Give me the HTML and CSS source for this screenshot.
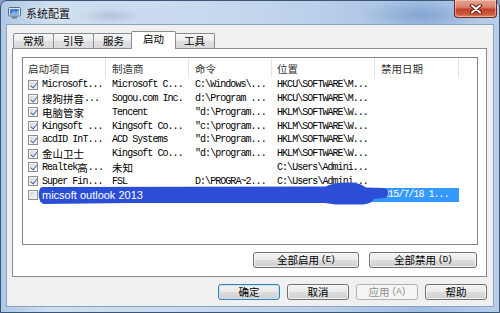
FILE: index.html
```html
<!DOCTYPE html>
<html>
<head>
<meta charset="utf-8">
<title>系统配置</title>
<link rel="stylesheet" href="styles.css">
</head>
<body>
<div class="window">
  <div class="titlebar">
    <svg class="app-icon" width="13" height="12" viewBox="0 0 13 12">
      <rect x="0.5" y="0.5" width="12" height="8.5" rx="1" fill="#e4e9f0" stroke="#5d6c80"/>
      <rect x="2" y="2" width="9" height="5.5" fill="#3f7fd2"/>
      <path d="M2 7.5 L6 4 L8 5.5 L11 3 L11 7.5 Z" fill="#7fb2ea"/>
      <rect x="4" y="9.5" width="5" height="2" fill="#6d7b8d"/>
    </svg>
    <span class="title">系统配置</span>
    <div class="close">
      <svg width="14" height="10" viewBox="0 0 14 10">
        <path d="M3 1.5 L11 8.5 M11 1.5 L3 8.5" stroke="#5a1c12" stroke-width="4" stroke-linecap="round"/>
        <path d="M3 1.5 L11 8.5 M11 1.5 L3 8.5" stroke="#ffffff" stroke-width="2" stroke-linecap="round"/>
      </svg>
    </div>
  </div>
  <div class="client">
    <div class="tabs">
      <div class="tab">常规</div>
      <div class="tab">引导</div>
      <div class="tab">服务</div>
      <div class="tab active">启动</div>
      <div class="tab">工具</div>
    </div>
    <div class="panel">
      <div class="list">
        <div class="row head">
          <div class="c c1">启动项目</div>
          <div class="c c2">制造商</div>
          <div class="c c3">命令</div>
          <div class="c c4">位置</div>
          <div class="c c5">禁用日期</div>
          <div class="c c6"></div>
        </div>
        <div class="row">
          <div class="c c1"><span class="cb on"></span><span class="m">Microsoft...</span></div>
          <div class="c c2 m">Microsoft C...</div>
          <div class="c c3 m">C:\Windows\...</div>
          <div class="c c4 m">HKCU\SOFTWARE\M...</div>
          <div class="c c5"></div>
        </div>
        <div class="row">
          <div class="c c1"><span class="cb on"></span><span class="z">搜狗拼音</span><span class="m">...</span></div>
          <div class="c c2 m">Sogou.com Inc.</div>
          <div class="c c3 m">d:\Program ...</div>
          <div class="c c4 m">HKCU\SOFTWARE\M...</div>
          <div class="c c5"></div>
        </div>
        <div class="row">
          <div class="c c1"><span class="cb on"></span><span class="z">电脑管家</span></div>
          <div class="c c2 m">Tencent</div>
          <div class="c c3 m">"d:\Program...</div>
          <div class="c c4 m">HKLM\SOFTWARE\W...</div>
          <div class="c c5"></div>
        </div>
        <div class="row">
          <div class="c c1"><span class="cb on"></span><span class="m">Kingsoft ...</span></div>
          <div class="c c2 m">Kingsoft Co...</div>
          <div class="c c3 m">"c:\program...</div>
          <div class="c c4 m">HKLM\SOFTWARE\W...</div>
          <div class="c c5"></div>
        </div>
        <div class="row">
          <div class="c c1"><span class="cb on"></span><span class="m">acdID InT...</span></div>
          <div class="c c2 m">ACD Systems</div>
          <div class="c c3 m">"d:\Program...</div>
          <div class="c c4 m">HKLM\SOFTWARE\W...</div>
          <div class="c c5"></div>
        </div>
        <div class="row">
          <div class="c c1"><span class="cb on"></span><span class="z">金山卫士</span></div>
          <div class="c c2 m">Kingsoft Co...</div>
          <div class="c c3 m">"d:\program...</div>
          <div class="c c4 m">HKLM\SOFTWARE\W...</div>
          <div class="c c5"></div>
        </div>
        <div class="row">
          <div class="c c1"><span class="cb on"></span><span class="m">Realtek</span><span class="z">高</span><span class="m">...</span></div>
          <div class="c c2 z">未知</div>
          <div class="c c3 m"></div>
          <div class="c c4 m">C:\Users\Admini...</div>
          <div class="c c5"></div>
        </div>
        <div class="row">
          <div class="c c1"><span class="cb on"></span><span class="m">Super Fin...</span></div>
          <div class="c c2 m">FSL</div>
          <div class="c c3 m">D:\PROGRA~2...</div>
          <div class="c c4 m">C:\Users\Admini...</div>
          <div class="c c5"></div>
        </div>
        <div class="row selected">
          <div class="c c1"><span class="cb"></span><span class="sel-name">micsoft outlook 2013</span></div>
          <div class="c c2"></div>
          <div class="c c3"></div>
          <div class="c c4"></div>
          <div class="c c5 m date">2015/7/18 1...</div>
        </div>
        <svg class="scribble" width="454" height="186" viewBox="23 58 454 186">
          <path d="M42 187 L326 186.5 C332 183 340 182.5 350 182.5 C358 182.5 362 185 366 187.5 L384 188 C389 189 390 196 385 198 L374 199 C372 202 370 204 362 204.5 L336 204.5 C330 204 328 203 320 203 L130 203 L44 204 C38 203 37 189 42 187 Z" fill="#2c4ed6"/>
        </svg>
      </div>
      <div class="panel-btns">
        <button class="btn wide1">全部启用 <span class="m">(E)</span></button>
        <button class="btn wide2">全部禁用 <span class="m">(D)</span></button>
      </div>
    </div>
    <div class="dlg-btns">
      <button class="btn dlg default">确定</button>
      <button class="btn dlg">取消</button>
      <button class="btn dlg disabled">应用 <span class="m">(A)</span></button>
      <button class="btn dlg">帮助</button>
    </div>
  </div>
</div>
</body>
</html>
```

FILE: styles.css
```css
* { box-sizing: border-box; margin: 0; padding: 0; }

html, body {
  width: 500px;
  height: 313px;
  overflow: hidden;
  background: #7f9fc4;
}

body {
  font-family: "Noto Sans CJK SC", "Noto Sans", sans-serif;
  font-size: 10.5px;
  color: #000;
}

.window {
  width: 500px;
  height: 313px;
  display: flex;
  flex-direction: column;
  border: 1px solid #3e5675;
  border-radius: 7px 7px 0 0;
  background:
    radial-gradient(ellipse 30px 8px at 110px 15px, rgba(120,140,170,0.3), transparent),
    radial-gradient(ellipse 60px 14px at 420px 14px, rgba(90,130,190,0.4), transparent),
    linear-gradient(90deg, #afc8e5 0, #cddeef 10%, #c8daee 40%, #b9cfe9 65%, #a0bde1 85%, #b8cfea 100%);
}

.titlebar {
  height: 23px;
  display: flex;
  align-items: center;
  padding-left: 7px;
}

.app-icon { margin-top: 1px; }

.title {
  margin-left: 5px;
  font-size: 11px;
  color: #111;
  text-shadow: 0 0 6px rgba(255,255,255,0.9);
}

.close {
  align-self: flex-start;
  margin-left: auto;
  margin-right: 2px;
  margin-top: -1px;
  width: 43px;
  height: 18px;
  border: 1px solid #6b2a22;
  border-top: none;
  border-radius: 0 0 4px 4px;
  background: linear-gradient(180deg, #e8a395 0%, #d9826c 42%, #c2412b 55%, #cc5a3f 85%, #de8a6a 100%);
  box-shadow: inset 0 0 0 1px rgba(255,220,210,0.5);
  display: flex;
  align-items: center;
  justify-content: center;
}

.client {
  flex: 1;
  margin: 0 5px 5px 5px;
  border: 1px solid #8ba3c0;
  background: #f0f0f0;
  display: flex;
  flex-direction: column;
}

.tabs {
  height: 23px;
  display: flex;
  align-items: flex-end;
  padding-left: 6px;
}

.tab {
  height: 15px;
  padding: 0 9px;
  margin-right: -1px;
  border: 1px solid #898c95;
  border-bottom: none;
  border-radius: 2px 2px 0 0;
  background: linear-gradient(180deg, #f7f7f7 0%, #ececec 50%, #e0e0e0 51%, #d9d9d9 100%);
  display: flex;
  align-items: center;
  line-height: 1;
  color: #000;
}

.tab.active {
  height: 18px;
  padding: 0 11px 2px;
  margin: 0 -2px -1px -2px;
  background: #ffffff;
  position: relative;
  z-index: 1;
}

.panel {
  height: 229px;
  margin: 0 6px 0 5px;
  border: 1px solid #898c95;
  background: #ffffff;
  padding: 8px 8px 8px 9px;
  display: flex;
  flex-direction: column;
}

.list {
  height: 188px;
  border: 1px solid #828790;
  position: relative;
  background: #fff;
}

.row {
  display: flex;
  height: 13.75px;
  align-items: center;
  white-space: nowrap;
}

.row.head {
  height: 20px;
  color: #333;
}

.row.head .c {
  height: 20px;
  border-right: 1px solid #e3e5e8;
  display: flex;
  align-items: center;
}

.row.head .c6 { border-right: none; flex: 1; }

.c {
  height: 13.75px;
  display: flex;
  align-items: center;
  padding-left: 6px;
  overflow: visible;
}

.c1 { width: 83px; padding-left: 5px; }
.c2 { width: 83px; }
.c3 { width: 83px; }
.c4 { width: 103px; padding-left: 5px; }
.c5 { width: 84px; }

.m {
  font-family: "Liberation Mono", "Courier New", monospace;
  font-size: 10px;
  letter-spacing: -0.95px;
  color: #000;
}

.z {
  font-family: "Noto Sans CJK SC", sans-serif;
  font-size: 10.5px;
}

.cb {
  display: inline-block;
  position: relative;
  flex: none;
  width: 10px;
  height: 10px;
  margin-right: 4px;
  border: 1px solid #8e8f8f;
  background: linear-gradient(135deg, #cdd2d8 0%, #e8eaed 60%, #f6f7f8 100%);
  box-shadow: inset 0 0 0 1px #f4f4f4;
}

.cb.on::after {
  content: "";
  position: absolute;
  left: 2.5px;
  top: 0px;
  width: 3px;
  height: 6px;
  border: solid #4a6aa8;
  border-width: 0 1.6px 1.6px 0;
  transform: rotate(40deg);
}

.row.selected .c1 {
  background: linear-gradient(90deg, transparent 17px, #3399ff 17px);
}

.row.selected .c2,
.row.selected .c3,
.row.selected .c4,
.row.selected .c5 {
  background: #3399ff;
}

.sel-name {
  position: relative;
  z-index: 2;
  font-family: "Liberation Sans", Arial, sans-serif;
  font-size: 11px;
  color: #fff;
}

.date {
  color: #fff;
  padding-left: 3px;
}

.scribble {
  position: absolute;
  left: 0;
  top: 0;
  z-index: 1;
  pointer-events: none;
}

.panel-btns {
  margin-top: 7px;
  display: flex;
  justify-content: flex-end;
  gap: 10px;
  padding-right: 1px;
}

.btn {
  height: 16px;
  border: 1px solid #707070;
  border-radius: 3px;
  background: linear-gradient(180deg, #f2f2f2 0%, #ebebeb 48%, #dddddd 52%, #cfcfcf 100%);
  box-shadow: inset 0 0 0 1px rgba(255,255,255,0.7);
  font-family: "Noto Sans CJK SC", sans-serif;
  font-size: 10.5px;
  color: #000;
  display: flex;
  align-items: center;
  justify-content: center;
  line-height: 1;
}

.btn .m { margin-left: 2px; font-size: 9px; letter-spacing: -0.8px; }

.wide1 { width: 106px; }
.wide2 { width: 108px; }

.dlg-btns {
  display: flex;
  justify-content: flex-end;
  gap: 7px;
  padding: 7px 6px 0 0;
}

.dlg { width: 62px; }

.btn.default {
  border-color: #3c7fb1;
  box-shadow: inset 0 0 0 1px #bfe5f8;
}

.btn.disabled {
  border-color: #adb2b5;
  background: #f4f4f4;
  box-shadow: none;
  color: #8d8d8d;
}

.btn.disabled .m { color: #8d8d8d; }
```
